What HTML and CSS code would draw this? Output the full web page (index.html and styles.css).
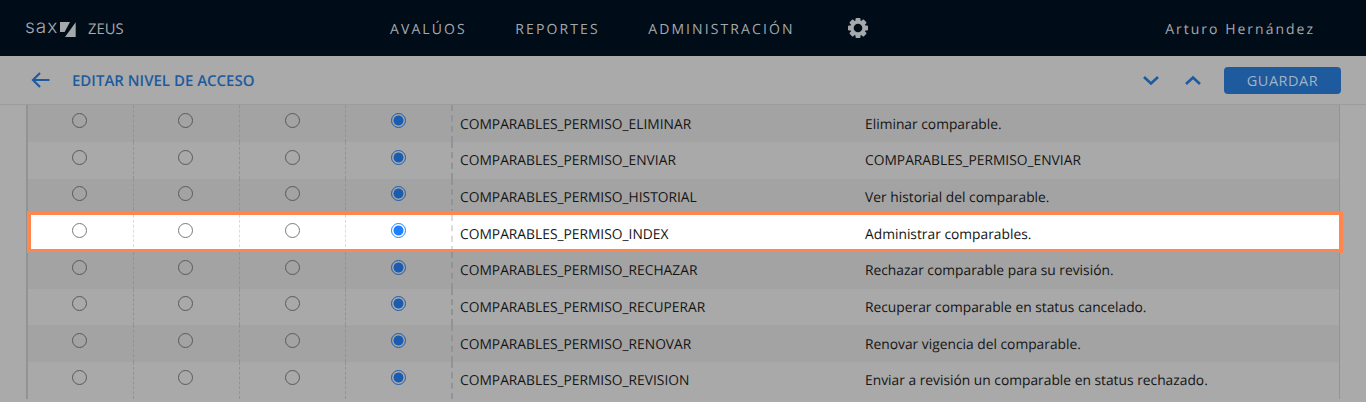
FILE: index.html
```html
<!DOCTYPE html>
<html lang="es">
<head>
  <meta charset="UTF-8">
  <title>Editar nivel de acceso</title>
  <link rel="stylesheet" href="styles.css">
</head>
<body>
  <header class="navbar">
    <div class="brand">
      <span class="brand-sax">sax</span>
      <svg class="brand-mark" width="16" height="15" viewBox="0 0 16 15"><path d="M0 0H10L4.600 10H0Z M15.700 0.300V15H5Z" fill="#a6a9ac"/></svg>
      <span class="brand-app">ZEUS</span>
    </div>
    <nav class="menu">
      <a>AVALÚOS</a>
      <a>REPORTES</a>
      <a>ADMINISTRACIÓN</a>
      <svg class="gear" width="22" height="22" viewBox="0 0 22 22">
        <g fill="#a6a9ac">
          <rect x="8.500" y="1" width="5" height="20" rx="1"/>
          <rect x="8.500" y="1" width="5" height="20" rx="1" transform="rotate(45 11 11)"/>
          <rect x="8.500" y="1" width="5" height="20" rx="1" transform="rotate(90 11 11)"/>
          <rect x="8.500" y="1" width="5" height="20" rx="1" transform="rotate(135 11 11)"/>
        </g>
        <circle cx="11" cy="11" r="6" fill="none" stroke="#a6a9ac" stroke-width="3.400"/>
        <circle cx="11" cy="11" r="4.300" fill="#000c18"/>
      </svg>
    </nav>
    <div class="user">Arturo Hernández</div>
  </header>

  <div class="toolbar">
    <svg class="back" width="20" height="18" viewBox="0 0 20 18"><path d="M18.500 9H2M9 2L2 9L9 16" fill="none" stroke="#1e5a9e" stroke-width="2.200"/></svg>
    <h1>EDITAR NIVEL DE ACCESO</h1>
    <svg class="chev chev-down" width="18" height="11" viewBox="0 0 18 11"><path d="M2 2L9 8.500L16 2" fill="none" stroke="#1e5a9e" stroke-width="2.600"/></svg>
    <svg class="chev chev-up" width="18" height="11" viewBox="0 0 18 11"><path d="M2 9L9 2.500L16 9" fill="none" stroke="#1e5a9e" stroke-width="2.600"/></svg>
    <button class="save">GUARDAR</button>
  </div>

  <div class="list">
    <div class="row">
      <span class="cell"><i class="radio"></i></span><span class="cell"><i class="radio"></i></span><span class="cell"><i class="radio"></i></span><span class="cell last"><i class="radio on"></i></span>
      <span class="name">COMPARABLES_PERMISO_ELIMINAR</span><span class="desc">Eliminar comparable.</span>
    </div>
    <div class="row">
      <span class="cell"><i class="radio"></i></span><span class="cell"><i class="radio"></i></span><span class="cell"><i class="radio"></i></span><span class="cell last"><i class="radio on"></i></span>
      <span class="name">COMPARABLES_PERMISO_ENVIAR</span><span class="desc">COMPARABLES_PERMISO_ENVIAR</span>
    </div>
    <div class="row">
      <span class="cell"><i class="radio"></i></span><span class="cell"><i class="radio"></i></span><span class="cell"><i class="radio"></i></span><span class="cell last"><i class="radio on"></i></span>
      <span class="name">COMPARABLES_PERMISO_HISTORIAL</span><span class="desc">Ver historial del comparable.</span>
    </div>
    <div class="row active">
      <span class="cell"><i class="radio"></i></span><span class="cell"><i class="radio"></i></span><span class="cell"><i class="radio"></i></span><span class="cell last"><i class="radio on"></i></span>
      <span class="name">COMPARABLES_PERMISO_INDEX</span><span class="desc">Administrar comparables.</span>
    </div>
    <div class="row">
      <span class="cell"><i class="radio"></i></span><span class="cell"><i class="radio"></i></span><span class="cell"><i class="radio"></i></span><span class="cell last"><i class="radio on"></i></span>
      <span class="name">COMPARABLES_PERMISO_RECHAZAR</span><span class="desc">Rechazar comparable para su revisión.</span>
    </div>
    <div class="row">
      <span class="cell"><i class="radio"></i></span><span class="cell"><i class="radio"></i></span><span class="cell"><i class="radio"></i></span><span class="cell last"><i class="radio on"></i></span>
      <span class="name">COMPARABLES_PERMISO_RECUPERAR</span><span class="desc">Recuperar comparable en status cancelado.</span>
    </div>
    <div class="row">
      <span class="cell"><i class="radio"></i></span><span class="cell"><i class="radio"></i></span><span class="cell"><i class="radio"></i></span><span class="cell last"><i class="radio on"></i></span>
      <span class="name">COMPARABLES_PERMISO_RENOVAR</span><span class="desc">Renovar vigencia del comparable.</span>
    </div>
    <div class="row">
      <span class="cell"><i class="radio"></i></span><span class="cell"><i class="radio"></i></span><span class="cell"><i class="radio"></i></span><span class="cell last"><i class="radio on"></i></span>
      <span class="name">COMPARABLES_PERMISO_REVISION</span><span class="desc">Enviar a revisión un comparable en status rechazado.</span>
    </div>
  </div>
</body>
</html>
```

FILE: styles.css
```css
html, body {
  height: 100%;
  overflow: hidden;
}

body {
  margin: 0;
  background: #aaaaaa;
  color: #151515;
  font-family: "Open Sans", sans-serif;
  text-rendering: geometricPrecision;
}

.navbar {
  display: flex;
  align-items: center;
  height: 56px;
  padding: 0 51px 0 25px;
  background: #000c18;
  color: #a6a9ac;
}

.brand {
  display: flex;
  align-items: center;
  width: 365px;
}

.brand-sax {
  font-family: "Inter", sans-serif;
  font-size: 19px;
  font-weight: 300;
  line-height: 20px;
  letter-spacing: 1px;
  width: 35px;
  margin-top: -2px;
}

.brand-mark {
  margin-top: 2px;
}

.brand-app {
  margin-left: 12px;
  font-size: 14.800px;
  line-height: 20px;
  margin-top: 2px;
}

.menu {
  display: flex;
  align-items: center;
  gap: 48.500px;
  font-size: 14px;
  letter-spacing: 2.100px;
}

.menu a {
  padding-top: 2px;
}

.gear {
  margin-left: 3.500px;
}

.user {
  margin-left: auto;
  padding-top: 2px;
  font-size: 14px;
  letter-spacing: 2px;
}

.toolbar {
  display: flex;
  align-items: center;
  box-sizing: border-box;
  height: 49.400px;
  padding: 0 25px 0 31px;
  background: #aaaaaa;
  border-bottom: 1px solid #9c9c9c;
}

.toolbar h1 {
  margin: 2px 0 0 21px;
  font-size: 15px;
  font-weight: 600;
  color: #1e5a9e;
}

.chev-down {
  margin-left: auto;
}

.chev-up {
  margin-left: 24px;
}

.save {
  width: 117px;
  height: 27px;
  margin-left: 22px;
  padding: 0;
  background: #1e5a9e;
  color: #a3b3c4;
  font-family: inherit;
  font-size: 14.500px;
  font-weight: 500;
  letter-spacing: 0.5px;
  border: none;
  border-radius: 4px;
}

.list {
  margin: 0 26px 0 26px;
  border-left: 2px solid #939393;
  border-right: 1px solid #939393;
}

.row {
  display: grid;
  grid-template-columns: repeat(3, 106px) 107px 404px 1fr;
  position: relative;
  height: 36.670px;
  font-size: 13.800px;
  background: #a9a9a9;
}

.row:nth-child(odd) {
  background: #a3a3a3;
}

.row.active {
  background: #fff;
}

/* orange frame sits over the row and sticks out a bit */
.row.active::after {
  content: "";
  position: absolute;
  top: -4px;
  bottom: -1.300px;
  left: -1px;
  right: -4px;
  border: 4px solid #ff874d;
}

.cell {
  display: flex;
  align-items: center;
  justify-content: center;
  padding-bottom: 6.600px;
  border-right: 1px dashed #939393;
}

.cell:nth-child(-n+2) {
  padding-right: 2px;
}

.cell.last {
  border-right: 2px dashed #939393;
}

.active .cell {
  border-right-color: #dcdcdc;
}

.radio {
  box-sizing: border-box;
  width: 15px;
  height: 15px;
  border: 1.500px solid #5a5a5a;
  border-radius: 50%;
}

.radio.on {
  border-color: #1a5cb0;
  background: radial-gradient(circle, #1a5cb0 0 4.700px, transparent 5.300px);
}

.active .radio {
  border-color: #7a7a7a;
}

.active .radio.on {
  border-color: #1e80ff;
  background: radial-gradient(circle, #1e80ff 0 4.700px, transparent 5.300px);
}

.name, .desc {
  display: flex;
  align-items: center;
  padding: 1px 0 0 8px;
  white-space: nowrap;
}

.name {
  padding-left: 7px;
}
```
